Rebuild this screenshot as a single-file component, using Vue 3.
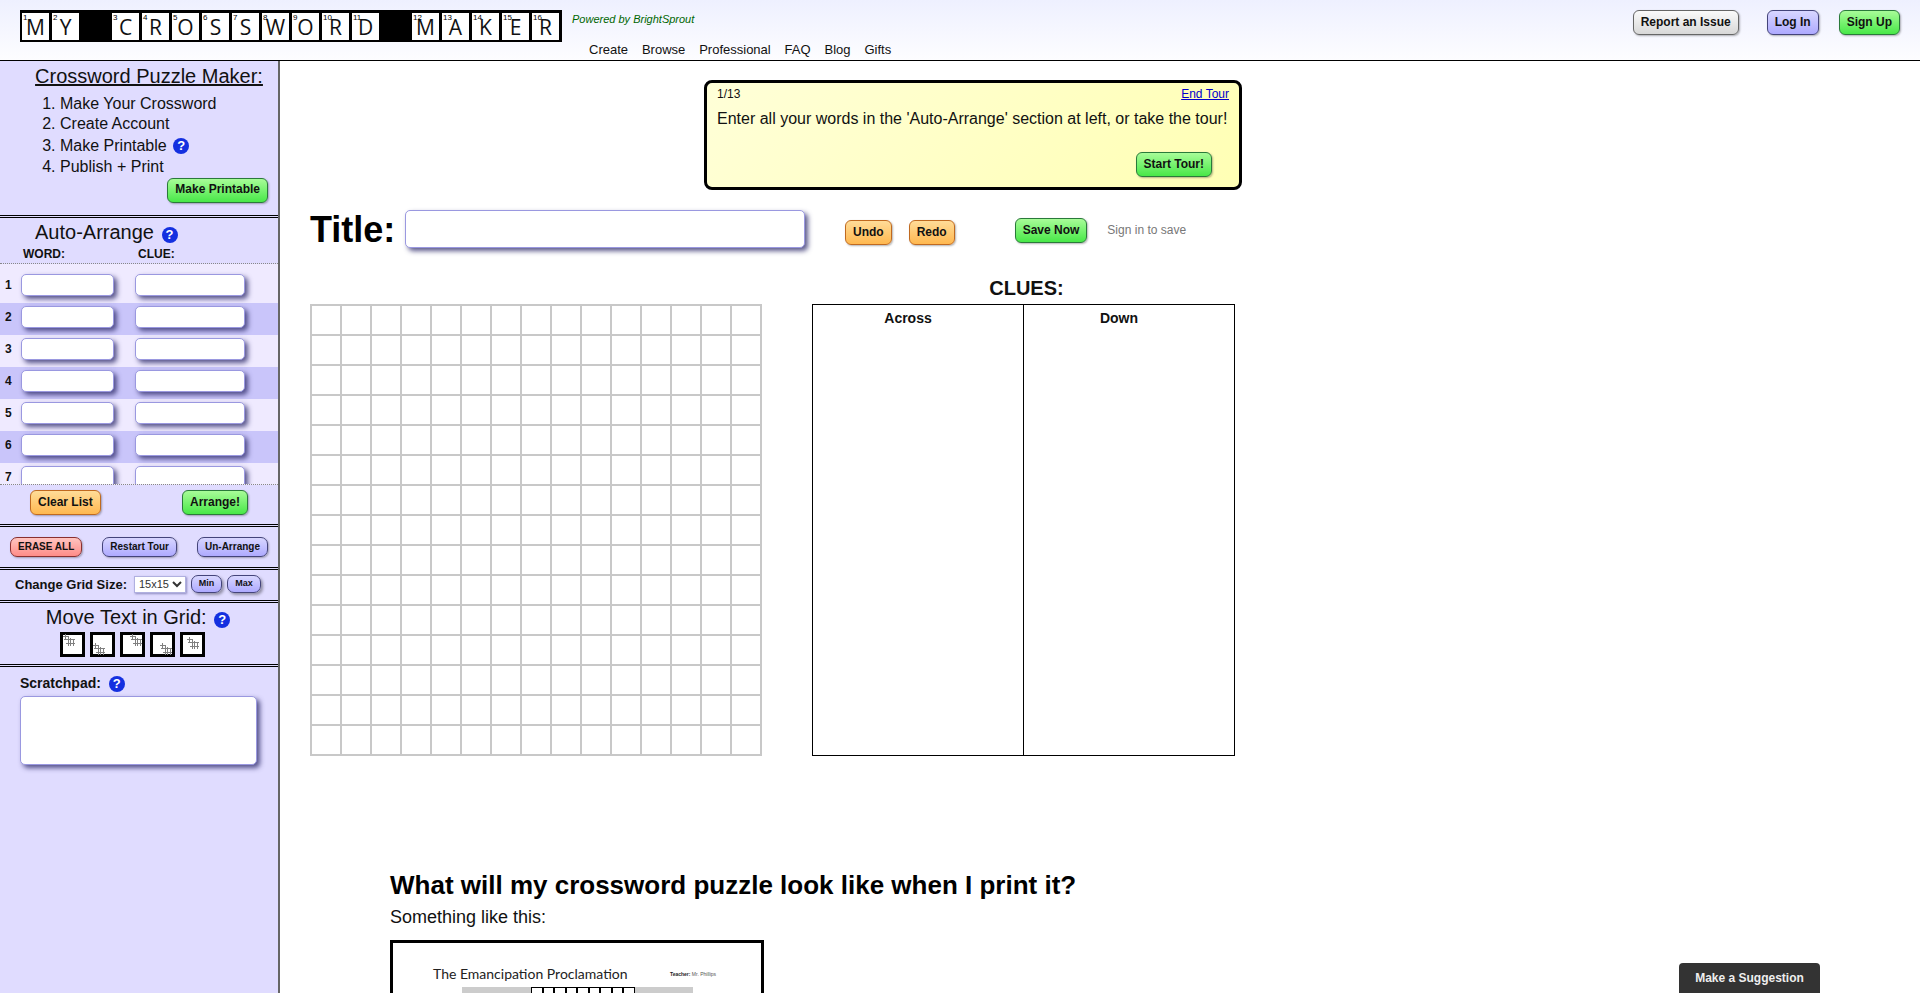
<script setup>
const logo = [
  ['M', 1], ['Y', 2], null, ['C', 3], ['R', 4], ['O', 5], ['S', 6], ['S', 7], ['W', 8],
  ['O', 9], ['R', 10], ['D', 11], null, ['M', 12], ['A', 13], ['K', 14], ['E', 15], ['R', 16]
]
const nav = ['Create', 'Browse', 'Professional', 'FAQ', 'Blog', 'Gifts']
const rows = [1, 2, 3, 4, 5, 6, 7]
const moves = [
  { x: 0, y: -1 }, { x: 0, y: 8 }, { x: 7, y: -1 }, { x: 7, y: 8 }, { x: 4, y: 2 }
]
</script>

<template>
  <div class="page">
    <header class="top">
      <div class="logo">
        <template v-for="(c, i) in logo" :key="i">
          <div v-if="c" class="tile"><span class="num">{{ c[1] }}</span>{{ c[0] }}</div>
          <div v-else class="blank"></div>
        </template>
      </div>
      <div class="topmid">
        <div class="powered">Powered by BrightSprout</div>
        <nav class="nav"><span v-for="n in nav" :key="n">{{ n }}</span></nav>
      </div>
      <div class="topright">
        <button class="btn grey">Report an Issue</button>
        <button class="btn purple login">Log In</button>
        <button class="btn green">Sign Up</button>
      </div>
    </header>

    <div class="body">
      <aside class="side">
        <section class="s s1">
          <div class="maker">Crossword Puzzle Maker:</div>
          <ol class="steps">
            <li>Make Your Crossword</li>
            <li>Create Account</li>
            <li class="tall">Make Printable <span class="help">?</span></li>
            <li>Publish + Print</li>
          </ol>
          <div class="mp"><button class="btn green">Make Printable</button></div>
        </section>

        <section class="s s2">
          <div class="aa-head">
            <div class="aa-title">Auto-Arrange <span class="help">?</span></div>
            <div class="aa-labels"><span class="lw">WORD:</span><span>CLUE:</span></div>
          </div>
          <div class="aa-list">
            <div v-for="r in rows" :key="r" class="aa-row" :class="{ even: r % 2 === 0 }">
              <span class="rn">{{ r }}</span>
              <input class="inp w" type="text" />
              <input class="inp c" type="text" />
            </div>
          </div>
          <div class="aa-actions">
            <button class="btn orange">Clear List</button>
            <button class="btn green">Arrange!</button>
          </div>
        </section>

        <section class="s s3">
          <button class="btn sm red">ERASE ALL</button>
          <button class="btn sm purple">Restart Tour</button>
          <button class="btn sm purple">Un-Arrange</button>
        </section>

        <section class="s s4">
          <label class="gs">Change Grid Size:</label>
          <select class="sel"><option>15x15</option></select>
          <button class="btn xs purple">Min</button>
          <button class="btn xs purple">Max</button>
        </section>

        <section class="s s5">
          <div class="mt">Move Text in Grid: <span class="help">?</span></div>
          <div class="moves">
            <div v-for="(m, i) in moves" :key="i" class="mv">
              <svg width="19" height="19" viewBox="0 0 19 19">
                <g :transform="`translate(${m.x} ${m.y})`" fill="none" stroke="#808080" stroke-width="1">
                  <path d="M0 2.5H6M1 5.5H12M3 9.5H12M2.5 0V6M5.5 2V12M7.5 4V12M10.5 5V12" />
                </g>
              </svg>
            </div>
          </div>
        </section>

        <section class="s6">
          <div class="sp">Scratchpad: <span class="help">?</span></div>
          <textarea class="pad"></textarea>
        </section>
      </aside>

      <main class="main">
        <div class="tour">
          <div class="tour-top"><span>1/13</span><a class="end">End Tour</a></div>
          <div class="tour-msg">Enter all your words in the 'Auto-Arrange' section at left, or take the tour!</div>
          <div class="tour-act"><button class="btn green">Start Tour!</button></div>
        </div>

        <div class="titlerow">
          <span class="tl">Title:</span>
          <input class="inp titleinp" type="text" />
          <button class="btn orange undo">Undo</button>
          <button class="btn orange redo">Redo</button>
          <button class="btn green save">Save Now</button>
          <span class="signin">Sign in to save</span>
        </div>

        <div class="work">
          <div class="grid">
            <div v-for="i in 225" :key="i" class="cell"></div>
          </div>
          <div class="cluescol">
            <div class="clueshead">CLUES:</div>
            <div class="clues">
              <div class="cc">Across</div>
              <div class="cc">Down</div>
            </div>
          </div>
        </div>

        <h2 class="q">What will my crossword puzzle look like when I print it?</h2>
        <p class="a">Something like this:</p>
        <div class="sample">
          <div class="sample-head">
            <span class="sample-title">The Emancipation Proclamation</span>
            <span class="teacher"><b>Teacher:</b> Mr. Phillips</span>
          </div>
          <div class="sample-bar">
            <i v-for="i in 9" :key="i"></i>
          </div>
        </div>
      </main>
    </div>

    <button class="suggest">Make a Suggestion</button>
  </div>
</template>

<style>
html, body { margin: 0; overflow: hidden; }
</style>

<style scoped>
.page {
  height: 100vh;
  overflow: hidden;
  display: flex;
  flex-direction: column;
  font-family: "Liberation Sans", Arial, sans-serif;
  color: #111;
  background: #fff;
}
.top {
  height: 60px;
  flex: none;
  border-bottom: 1px solid #000;
  display: flex;
  padding: 0 20px;
  background: linear-gradient(#eef0ff, #fdfdff);
}
.logo {
  margin-top: 10px;
  width: 542px;
  height: 32px;
  box-sizing: border-box;
  background: #000;
  padding: 3px 3px 2px 2px;
  display: grid;
  grid-template-columns: repeat(18, 27px);
  grid-auto-rows: 27px;
  gap: 3px;
}
.tile {
  position: relative;
  background: #fff;
  font-family: "Open Sans", sans-serif;
  font-size: 21px;
  line-height: 28px;
  text-align: center;
  color: #111;
}
.num {
  position: absolute;
  left: 1px;
  top: 0;
  font-family: "Liberation Sans", sans-serif;
  font-size: 8px;
  line-height: 9px;
  color: #000;
}
.topmid { margin-left: 10px; }
.powered {
  margin-top: 12px;
  font-size: 11px;
  line-height: 14px;
  font-style: italic;
  color: #060;
}
.nav {
  margin-top: 16px;
  padding-left: 17px;
  display: flex;
  gap: 13.9px;
  font-size: 13px;
  line-height: 15px;
  color: #111;
}
.topright {
  margin-left: auto;
  margin-top: 10px;
  display: flex;
  align-items: flex-start;
}
.login { margin: 0 20px 0 28px; }

.btn {
  height: 25px;
  padding: 0 7px 2px;
  border: 1px solid #333;
  border-radius: 6px;
  font-family: "Liberation Sans", Arial, sans-serif;
  font-size: 12px;
  font-weight: bold;
  color: #111;
  box-shadow: 1px 1px 2px rgba(0, 0, 0, .3);
  white-space: nowrap;
  flex: none;
}
.green { background: linear-gradient(#a8fc98, #48e848); border-color: #2a7a3a; }
.orange { background: linear-gradient(#ffdc98, #ffb850); border-color: #c06a20; }
.purple { background: linear-gradient(#d8d6ff, #aeaaff); border-color: #44447a; }
.grey { background: linear-gradient(#fafafa, #d8d8d8); border-color: #666; }
.red { background: linear-gradient(#ffc4c0, #ff8c88); border-color: #8a3030; }
.sm { height: 20px; font-size: 10px; padding: 0 7px 1px; border-radius: 7px; }
.xs { height: 18px; width: 31px; font-size: 9px; padding: 0 0 2px; border-radius: 7px; box-shadow: 2px 2px 3px rgba(0, 0, 0, .35); }
.xs:last-child { width: 34px; }
.mp .btn { padding-bottom: 4px; }

.help {
  display: inline-block;
  width: 16px;
  height: 16px;
  border-radius: 50%;
  background: #1430e0;
  color: #fff;
  font-size: 13px;
  font-weight: bold;
  line-height: 16px;
  text-align: center;
  vertical-align: 1px;
}

.body { flex: 1; display: flex; min-height: 0; }
.side {
  width: 278px;
  flex: none;
  background: #e0dcff;
  border-right: 2px solid #666;
}
.s { border-bottom: 3px double #000; }
.s1 { height: 154px; box-sizing: content-box; }
.maker {
  padding: 4px 0 0 20px;
  text-align: center;
  font-size: 20px;
  line-height: 23px;
  text-decoration: underline;
}
.steps {
  margin: 6px 0 0;
  padding: 0 0 0 60px;
  font-size: 16px;
  line-height: 20px;
}
.tall { height: 23px; line-height: 24px; }
.tall .help { margin-left: 2px; }
.mp { display: flex; justify-content: flex-end; margin: 1px 10px 0 0; }
.s2 { height: 306px; }
.aa-head { height: 45px; border-bottom: 1px dotted #888; }
.aa-title {
  padding: 3px 0 0 35px;
  height: 23px;
  font-size: 20px;
  line-height: 23px;
}
.aa-title .help { margin-left: 2px; vertical-align: 0; }
.aa-labels {
  margin-top: 3px;
  padding-left: 23px;
  font-size: 12px;
  line-height: 14px;
  font-weight: bold;
}
.lw { display: inline-block; width: 115px; }
.aa-list {
  height: 213px;
  padding-top: 7px;
  overflow: hidden;
  background: #efeaff;
  border-bottom: 1px dotted #888;
}
.aa-row {
  height: 32px;
  box-sizing: border-box;
  padding: 3px 0 0 5px;
  display: flex;
}
.aa-row.even { background: #c9c5fa; }
.rn { width: 16px; font-size: 12px; font-weight: bold; line-height: 22px; }
.inp {
  height: 22px;
  box-sizing: border-box;
  border: 1px solid #9a98e0;
  border-radius: 5px;
  background: #fff;
  box-shadow: 3px 3px 5px rgba(50, 48, 110, .8);
  outline: none;
  padding: 0 4px;
  flex: none;
}
.w { width: 93px; }
.c { width: 110px; margin-left: 21px; }
.aa-actions {
  display: flex;
  justify-content: space-between;
  padding: 5px 30px 0;
}
.s3 {
  height: 30px;
  padding: 10px 10px 0;
  display: flex;
  justify-content: space-between;
  align-items: flex-start;
}
.s4 {
  height: 28px;
  padding: 0 0 2px 15px;
  display: flex;
  align-items: center;
}
.gs { font-size: 13px; font-weight: bold; width: 119px; flex: none; }
.sel {
  width: 52px;
  height: 17px;
  font-family: "Liberation Sans", sans-serif;
  font-size: 11px;
  padding: 0;
  border: 1px solid #b0b0e0;
  background-color: #fff;
  color: #333;
  box-shadow: 1px 1px 2px rgba(60, 55, 130, .5);
}
.s4 .btn { margin-left: 5px; }
.s5 { height: 61px; }
.mt {
  padding: 3px 2px 0 0;
  height: 23px;
  text-align: center;
  font-size: 20px;
  line-height: 23px;
}
.mt .help { margin-left: 2px; vertical-align: 0; }
.moves { display: flex; gap: 5px; padding: 3px 0 0 60px; }
.mv {
  width: 25px;
  height: 25px;
  box-sizing: border-box;
  border: 3px solid #000;
  background: #fff;
}
.mv svg { display: block; overflow: visible; }
.s6 { padding: 6px 0 0 20px; }
.sp { height: 20px; font-size: 14px; font-weight: bold; line-height: 20px; }
.sp .help { margin-left: 4px; vertical-align: 0; }
.pad {
  display: block;
  margin-top: 3px;
  width: 237px;
  height: 69px;
  box-sizing: border-box;
  border: 1px solid #9a98e0;
  border-radius: 5px;
  background: #fff;
  box-shadow: 3px 3px 5px rgba(50, 48, 110, .8);
  outline: none;
  resize: none;
}

.main { flex: 1; min-width: 0; }
.tour {
  margin: 19px 0 0 424px;
  width: 538px;
  height: 110px;
  box-sizing: border-box;
  border: 3px solid #000;
  border-radius: 8px;
  background: linear-gradient(135deg, #ffffd8, #ffffb4);
  padding: 4px 10px 0;
}
.tour-top {
  display: flex;
  justify-content: space-between;
  font-size: 12px;
  line-height: 14px;
}
.end { color: #00c; text-decoration: underline; }
.tour-msg { margin-top: 9px; font-size: 16px; line-height: 18px; white-space: nowrap; }
.tour-act { display: flex; justify-content: flex-end; margin: 24px 17px 0 0; }

.titlerow {
  margin: 20px 0 0 30px;
  height: 38px;
  display: flex;
  align-items: flex-start;
}
.tl { font-size: 36px; line-height: 40px; font-weight: bold; color: #000; width: 95px; flex: none; }
.titleinp { width: 400px; height: 38px; }
.undo { margin: 10px 0 0 40px; }
.redo { margin: 10px 0 0 17px; }
.save { margin: 8px 0 0 60px; }
.signin { margin: 13px 0 0 20px; font-size: 12px; line-height: 14px; color: #777; }

.work { margin: 28px 0 0 30px; display: flex; }
.grid {
  margin-top: 28px;
  width: 452px;
  height: 452px;
  box-sizing: border-box;
  border-top: 2px solid #c8c8c8;
  border-left: 2px solid #c8c8c8;
  display: grid;
  grid-template-columns: repeat(15, 30px);
  grid-auto-rows: 30px;
}
.cell {
  border-right: 2px solid #c8c8c8;
  border-bottom: 2px solid #c8c8c8;
}
.cluescol { margin-left: 50px; width: 423px; }
.clueshead {
  height: 28px;
  padding-left: 6px;
  box-sizing: border-box;
  text-align: center;
  font-size: 20px;
  font-weight: bold;
  line-height: 24px;
}
.clues {
  height: 452px;
  box-sizing: border-box;
  border: 1px solid #000;
  display: grid;
  grid-template-columns: 210px 1fr;
}
.cc {
  text-align: center;
  font-size: 14px;
  font-weight: bold;
  line-height: 16px;
  padding: 5px 20px 0 0;
}
.cc + .cc { border-left: 1px solid #000; }

.q {
  margin: 114px 0 0 110px;
  font-size: 26px;
  line-height: 30px;
  font-weight: bold;
  color: #000;
}
.a { margin: 7px 0 0 110px; font-size: 18px; line-height: 21px; }
.sample {
  margin: 12px 0 0 110px;
  width: 374px;
  height: 200px;
  box-sizing: border-box;
  border: 3px solid #000;
  background: #fff;
}
.sample-head {
  padding: 22px 0 0 40px;
  display: flex;
  align-items: center;
  height: 39px;
  box-sizing: border-box;
}
.sample-title { font-family: Lato, sans-serif; font-size: 14px; line-height: 16px; color: #222; width: 237px; flex: none; white-space: nowrap; }
.teacher { font-size: 5px; color: #555; }
.teacher b { color: #222; }
.sample-bar {
  margin: 5px 0 0 69px;
  width: 231px;
  padding-left: 69px;
  box-sizing: border-box;
  background: #ccc;
  display: flex;
  height: 40px;
}
.sample-bar i {
  width: 11.5px;
  height: 11.5px;
  box-sizing: border-box;
  border: 1px solid #000;
  background: #fff;
  flex: none;
}
.suggest {
  position: fixed;
  left: 1679px;
  bottom: 0;
  width: 141px;
  height: 30px;
  border: none;
  border-radius: 4px 4px 0 0;
  background: #333;
  color: #eee;
  font-family: "Liberation Sans", sans-serif;
  font-size: 12px;
  font-weight: bold;
}
</style>
